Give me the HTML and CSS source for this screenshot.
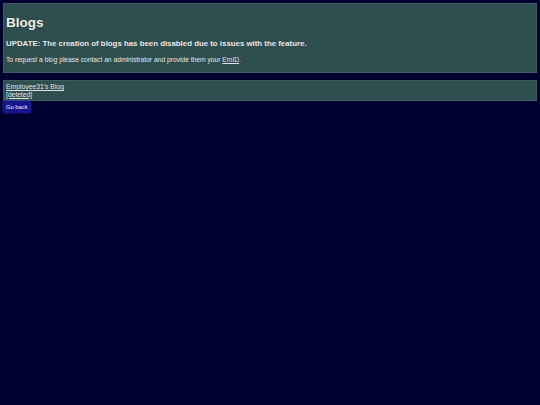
FILE: index.html
```html
<!DOCTYPE html>
<html>
<head>
<meta charset="utf-8">
<link rel="stylesheet" href="styles.css">
</head>
<body>
<div class="panel header">
  <h1 class="title">Blogs</h1>
  <p class="update">UPDATE: The creation of blogs has been disabled due to issues with the feature.</p>
  <p class="note">To request a blog please contact an administrator and provide them your <a href="#" class="link">EmID</a>.</p>
</div>
<div class="panel list">
  <a href="#" class="link item">Employee31's Blog</a>
  <a href="#" class="link item">[deleted]</a>
</div>
<button class="back">Go back</button>
</body>
</html>
```
FILE: styles.css
```css
html, body {
  margin: 0;
  padding: 0;
}
body {
  background: #000030;
  font-family: "Liberation Sans", Arial, sans-serif;
  color: #e6e6e6;
  padding: 3px;
}
.panel {
  background: #2f4f4f;
  border: 1px solid #3c5c66;
  padding: 0 2px;
}
.header {
  padding-top: 11px;
  padding-bottom: 8px;
}
.title {
  font-size: 13.5px;
  line-height: 15px;
  margin: 0 0 9px 0;
  color: #f0f0f0;
  text-shadow: 0 0 1px rgba(0,0,0,0.6);
}
.update {
  font-size: 7.85px;
  line-height: 9px;
  font-weight: bold;
  margin: 0 0 8px 0;
}
.note {
  font-size: 6.7px;
  line-height: 8px;
  margin: 0;
}
.list {
  margin-top: 7px;
  padding-top: 2px;
  padding-bottom: 2px;
}
.link {
  color: #e0e0e0;
}
.item {
  display: block;
  width: max-content;
  font-size: 6.8px;
  line-height: 7.5px;
}
.back {
  display: block;
  margin-top: 0;
  background: #16168c;
  color: #f0f0f0;
  border: none;
  border-radius: 2px;
  box-shadow: 0 0 2px #2a2ad0;
  font-family: "Liberation Sans", Arial, sans-serif;
  font-size: 5.8px;
  padding: 3px 3px 2.5px;
}
```
